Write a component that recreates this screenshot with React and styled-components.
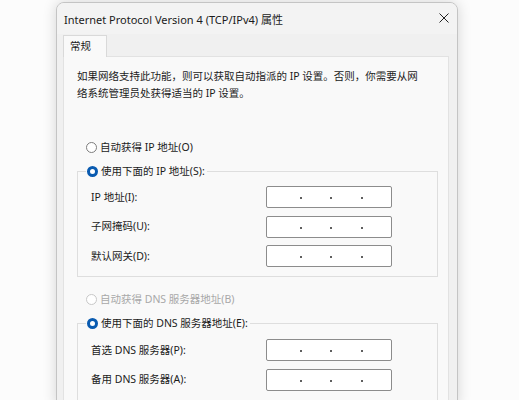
import React from 'react';
import styled, { createGlobalStyle } from 'styled-components';

const Global = createGlobalStyle`
    html, body {
        margin: 0;
        background: #fcfcfc;
    }
    body {
        font-family: "Noto Sans", "Noto Sans CJK SC", sans-serif;
        color: #1b1b1b;
        overflow: hidden;
    }
`;

const Stage = styled.div`
    padding: 2px 0 0 56px;
    height: 400px;
    box-sizing: border-box;
    overflow: hidden;
`;

const Window = styled.div`
    width: 402px;
    height: 404px;
    box-sizing: border-box;
    background: #f0f0f0;
    border: 1px solid #c4c4c4;
    border-radius: 8px 8px 0 0;
    box-shadow: 0 0 14px rgba(0,0,0,.16);
    display: flex;
    flex-direction: column;
    overflow: hidden;
`;

const TitleBar = styled.div`
    height: 31px;
    flex: none;
    display: flex;
    align-items: center;
    justify-content: space-between;
    padding: 0 8px 0 7px;
    font-size: 11px;
    background: #f3f3f3;
`;

const Close = styled.svg`
    width: 10px;
    height: 10px;
    margin-top: -2px;
`;

const Tabs = styled.div`
    display: flex;
    padding-left: 6px;
    margin-top: 1px;
`;

const Tab = styled.div`
    width: 44px;
    height: 22px;
    box-sizing: border-box;
    border: 1px solid #d9d9d9;
    border-bottom: none;
    background: #f9f9f9;
    font-size: 10.5px;
    line-height: 20px;
    padding-left: 6px;
    margin-bottom: -1px;
    position: relative;
`;

const Panel = styled.div`
    margin: 0 8px 0 6px;
    flex: 1;
    background: #f9f9f9;
    border: 1px solid #e2e2e2;
    padding: 11px 10px 0 13px;
    font-size: 10.5px;
    line-height: 17px;
`;

const Desc = styled.p`
    margin: 0;
    width: 345px;
`;

const Option = styled.label`
    display: flex;
    align-items: center;
    height: 17px;
    margin-top: ${p => p.$top || 0}px;
    margin-left: ${p => (p.$inline ? 0 : 9)}px;
    color: ${p => (p.$disabled ? '#a8a8a8' : '#1b1b1b')};
`;

const Radio = styled.span`
    width: 11px;
    height: 11px;
    box-sizing: border-box;
    border-radius: 50%;
    margin-right: 3px;
    flex: none;
    border: ${p => (p.$checked ? '3.5px solid #0a5bb0' : `1px solid ${p.$disabled ? '#c8c8c8' : '#7d7d7d'}`)};
    background: #fff;
`;

const Group = styled.fieldset`
    margin: ${p => p.$top}px 0 0 0;
    padding: 0 0 9px 0;
    border: 1px solid #dedede;
    min-width: 0;
`;

const Legend = styled.legend`
    padding: 0 2px 0 1px;
    margin-left: 8px;
    line-height: 17px;
`;

const Rows = styled.div`
    display: flex;
    flex-direction: column;
    gap: 7.5px;
    padding-top: ${p => p.$pad}px;
`;

const Row = styled.div`
    display: flex;
    align-items: center;
    height: 22px;
    padding-left: 13px;
`;

const Label = styled.span`
    width: 175px;
`;

const IpBox = styled.div`
    width: 126px;
    height: 22px;
    box-sizing: border-box;
    border: 1px solid #8c8c8c;
    border-radius: 2px;
    background: #fff;
    display: flex;
    align-items: center;
    padding-left: 3px;
`;

const Seg = styled.span`
    width: 30.5px;
    flex: none;
`;

const Dot = styled.span`
    width: 2px;
    height: 2px;
    margin: 2px -1px 0;
    border-radius: 50%;
    background: #2a2a2a;
    flex: none;
`;

const Ip = () => (
    <IpBox>
        <Seg /><Dot /><Seg /><Dot /><Seg /><Dot /><Seg />
    </IpBox>
);

const ipRows = ['IP 地址(I):', '子网掩码(U):', '默认网关(D):'];
const dnsRows = ['首选 DNS 服务器(P):', '备用 DNS 服务器(A):'];

export default function App() {
    return (
        <Stage>
            <Global />
            <Window>
                <TitleBar>
                    <span>Internet Protocol Version 4 (TCP/IPv4) 属性</span>
                    <Close viewBox="0 0 10 10">
                        <path d="M0.5 0.5 L9.5 9.5 M9.5 0.5 L0.5 9.5" stroke="#222" strokeWidth="1" fill="none" />
                    </Close>
                </TitleBar>
                <Tabs>
                    <Tab>常规</Tab>
                </Tabs>
                <Panel>
                    <Desc>如果网络支持此功能，则可以获取自动指派的 IP 设置。否则，你需要从网络系统管理员处获得适当的 IP 设置。</Desc>

                    <Option $top={37}><Radio />自动获得 IP 地址(O)</Option>
                    <Group $top={7}>
                        <Legend>
                            <Option $inline><Radio $checked />使用下面的 IP 地址(S):</Option>
                        </Legend>
                        <Rows $pad={6}>
                            {ipRows.map(t => (
                                <Row key={t}><Label>{t}</Label><Ip /></Row>
                            ))}
                        </Rows>
                    </Group>

                    <Option $top={14} $disabled><Radio $disabled />自动获得 DNS 服务器地址(B)</Option>
                    <Group $top={7}>
                        <Legend>
                            <Option $inline><Radio $checked />使用下面的 DNS 服务器地址(E):</Option>
                        </Legend>
                        <Rows $pad={7}>
                            {dnsRows.map(t => (
                                <Row key={t}><Label>{t}</Label><Ip /></Row>
                            ))}
                        </Rows>
                    </Group>
                </Panel>
            </Window>
        </Stage>
    );
}
